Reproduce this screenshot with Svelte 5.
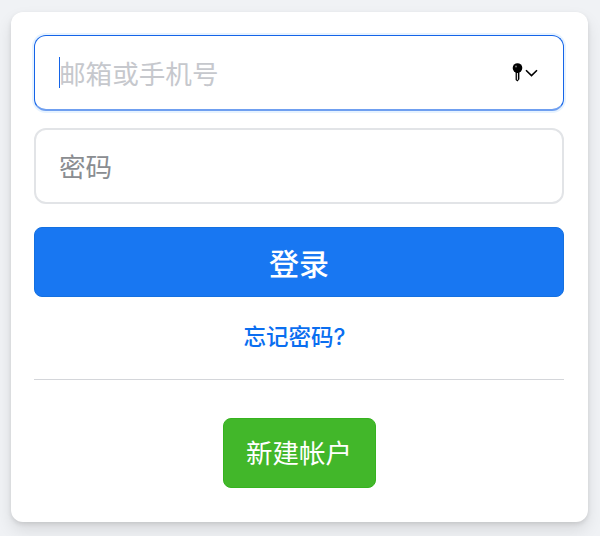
<script>
  let email = $state('');
  let password = $state('');
</script>

<main class="page">
  <form class="card" onsubmit={(e) => e.preventDefault()}>
    <div class="field focused">
      <span class="caret"></span>
      <input class="input" type="text" placeholder="邮箱或手机号" bind:value={email} />
      <span class="keychain" aria-hidden="true">
        <svg width="11" height="19" viewBox="0 0 11 19">
          <circle cx="5.5" cy="5" r="4.8" fill="#000" />
          <circle cx="4" cy="3.4" r="1" fill="#777" />
          <path d="M3.6 9h3.8v7.2L5.5 18.6 3.6 17z" fill="#000" />
          <path d="M5.4 10v6.8" stroke="#fff" stroke-width="1" />
        </svg>
        <svg width="13" height="8" viewBox="0 0 13 8">
          <path d="M1 1.2l5.5 5.4L12 1.2" fill="none" stroke="#000" stroke-width="1.6" />
        </svg>
      </span>
    </div>
    <div class="field">
      <input class="input dark" type="password" placeholder="密码" bind:value={password} />
    </div>
    <button class="login" type="submit">登录</button>
    <a class="forgot" href="#forgot">忘记密码?</a>
    <div class="divider"></div>
    <div class="create-row">
      <button class="create" type="button">新建帐户</button>
    </div>
  </form>
</main>

<style>
  :global(body) {
    margin: 0;
    background: #f0f2f5;
  }
  .page {
    box-sizing: border-box;
    width: 600px;
    height: 536px;
    padding: 12px 12px 14px 11px;
    font-family: Inter, "Liberation Sans", "Noto Sans CJK SC", sans-serif;
  }
  .card {
    box-sizing: border-box;
    height: 510px;
    padding: 23px 24px 0 23px;
    background: #fff;
    border-radius: 12px;
    box-shadow: 0 2px 4px rgba(0, 0, 0, 0.1), 0 8px 16px rgba(0, 0, 0, 0.1);
    display: flex;
    flex-direction: column;
  }
  .field {
    position: relative;
    display: flex;
    height: 76px;
    flex: none;
    box-sizing: border-box;
    border: 2px solid #e2e4e7;
    border-radius: 12px;
    margin-bottom: 17px;
    background: #fff;
  }
  .field + .field {
    margin-bottom: 23px;
  }
  .field.focused {
    border: 1px solid #1464e8;
    border-bottom: 2px solid #6f9ff0;
    box-shadow: 0 0 0 2px #e7f3ff;
  }
  .field.focused .input {
    padding-left: 24px;
  }
  .input {
    width: 100%;
    min-width: 0;
    border: 0;
    outline: 0;
    background: transparent;
    padding: 2px 23px 0;
    font: inherit;
    font-size: 26.6px;
    color: #1c1e21;
    border-radius: 10px;
  }
  .input::placeholder {
    color: #c6c8cd;
    opacity: 1;
  }
  .input.dark::placeholder {
    color: #8a8d91;
  }
  .caret {
    position: absolute;
    left: 24px;
    top: 21px;
    width: 1px;
    height: 31px;
    background: #1464e8;
  }
  .keychain {
    position: absolute;
    right: 25px;
    top: 27px;
    display: flex;
    align-items: center;
    gap: 2px;
  }
  .login {
    flex: none;
    height: 70px;
    border: 1px solid #1470e0;
    border-radius: 8px;
    background: #1877f2;
    color: #fff;
    font: inherit;
    font-size: 30px;
    font-weight: 500;
    padding: 0;
  }
  .forgot {
    margin-top: 26px;
    padding-right: 9px;
    text-align: center;
    color: #0a6ef0;
    font-size: 22.5px;
    font-weight: 500;
    line-height: 28px;
    text-decoration: none;
  }
  .divider {
    margin-top: 28px;
    height: 1px;
    background: #d4d6da;
    flex: none;
  }
  .create-row {
    display: flex;
    justify-content: center;
    margin-top: 38px;
  }
  .create {
    width: 153px;
    height: 70px;
    border: 1px solid #36b31f;
    border-radius: 8px;
    background: #42b72a;
    color: #fff;
    font: inherit;
    font-size: 26.5px;
    font-weight: 400;
    padding: 0 0 3px;
  }
</style>
